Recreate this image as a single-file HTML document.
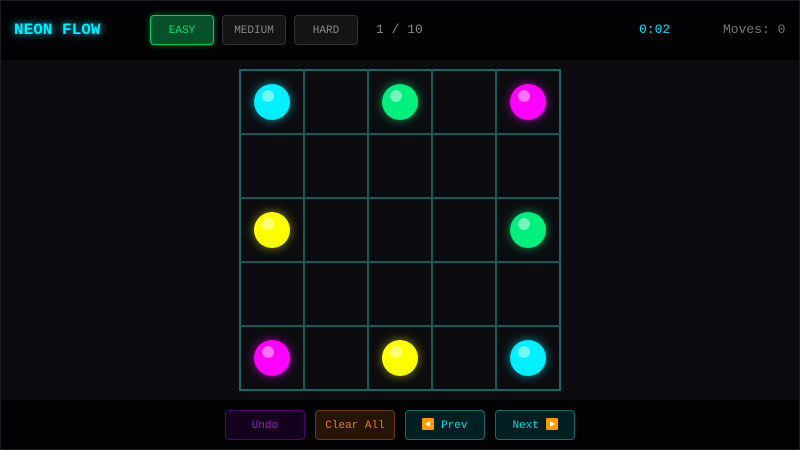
<!DOCTYPE html>
<html><head><style>
*{margin:0;padding:0;box-sizing:border-box}
body{width:800px;height:450px;background:#0c0c10;font-family:"Liberation Mono",monospace;position:relative;overflow:hidden}
.frame{position:absolute;left:0;top:0;width:800px;height:450px;border:1px solid #1c1c20;z-index:5;pointer-events:none}
.hdr{position:absolute;left:0;top:0;width:800px;height:60px;background:#030305}
.ftr{position:absolute;left:0;top:400px;width:800px;height:50px;background:#030305}
.t{position:absolute;white-space:nowrap}
.btn{position:absolute;border-radius:4px;font-size:11px;text-align:center;line-height:30px;height:30px}
.grid{position:absolute;left:239px;top:69px;width:322px;height:322px;border:2px solid #1b6666}
.v{position:absolute;top:69px;width:2px;height:322px;background:#185858}
.h{position:absolute;left:239px;height:2px;width:322px;background:#185858}
.d{position:absolute;width:36px;height:36px;border-radius:50%}
.d::after{content:"";position:absolute;left:8px;top:6px;width:12px;height:12px;border-radius:50%;background:rgba(255,255,255,.45)}
.c{background:#00f0ff;box-shadow:0 0 10px rgba(0,240,255,.6)}
.g{background:#00f080;box-shadow:0 0 10px rgba(0,240,128,.6)}
.m{background:#ff00ff;box-shadow:0 0 10px rgba(255,0,255,.6)}
.y{background:#ffff00;box-shadow:0 0 10px rgba(255,255,0,.5)}
.ic{display:inline-block;width:12px;height:12px;background:#ff9900;vertical-align:-2px;position:relative;border-radius:1px}
</style></head><body>
<div class="hdr"></div>
<div class="t" style="left:14px;top:21px;font-size:16px;font-weight:bold;color:#00f0ff;text-shadow:0 0 8px #00e0ff">NEON FLOW</div>
<div class="btn" style="left:150px;top:15px;width:64px;background:#06502a;border:1px solid #00d060;color:#00e070;box-shadow:0 0 6px rgba(0,220,100,.5)">EASY</div>
<div class="btn" style="left:222px;top:15px;width:64px;background:#141416;border:1px solid #333;color:#888">MEDIUM</div>
<div class="btn" style="left:294px;top:15px;width:64px;background:#141416;border:1px solid #333;color:#888">HARD</div>
<div class="t" style="left:376px;top:22px;font-size:13px;color:#888">1 / 10</div>
<div class="t" style="left:639px;top:22px;font-size:13px;color:#00e0ff">0:02</div>
<div class="t" style="left:723px;top:22px;font-size:13px;color:#777">Moves: 0</div>

<div class="grid"></div>
<div class="v" style="left:303px"></div><div class="v" style="left:367px"></div><div class="v" style="left:431px"></div><div class="v" style="left:495px"></div>
<div class="h" style="top:133px"></div><div class="h" style="top:197px"></div><div class="h" style="top:261px"></div><div class="h" style="top:325px"></div>

<div class="d c" style="left:254px;top:84px"></div>
<div class="d g" style="left:382px;top:84px"></div>
<div class="d m" style="left:510px;top:84px"></div>
<div class="d y" style="left:254px;top:212px"></div>
<div class="d g" style="left:510px;top:212px"></div>
<div class="d m" style="left:254px;top:340px"></div>
<div class="d y" style="left:382px;top:340px"></div>
<div class="d c" style="left:510px;top:340px"></div>

<div class="ftr"></div>
<div class="btn" style="left:225px;top:410px;width:80px;background:#14001e;border:1px solid #4a0a6a;color:#9a20c8">Undo</div>
<div class="btn" style="left:315px;top:410px;width:80px;background:#261506;border:1px solid #6a3a10;color:#e08018">Clear All</div>
<div class="btn" style="left:405px;top:410px;width:80px;background:#022022;border:1px solid #1a6a6a;color:#00d8e0"><span class="ic"><span style="position:absolute;left:3px;top:3px;border-right:5px solid #fff;border-top:3px solid transparent;border-bottom:3px solid transparent"></span></span> Prev</div>
<div class="btn" style="left:495px;top:410px;width:80px;background:#022022;border:1px solid #1a6a6a;color:#00d8e0">Next <span class="ic"><span style="position:absolute;left:4px;top:3px;border-left:5px solid #fff;border-top:3px solid transparent;border-bottom:3px solid transparent"></span></span></div>
<div class="frame"></div>
</body></html>
